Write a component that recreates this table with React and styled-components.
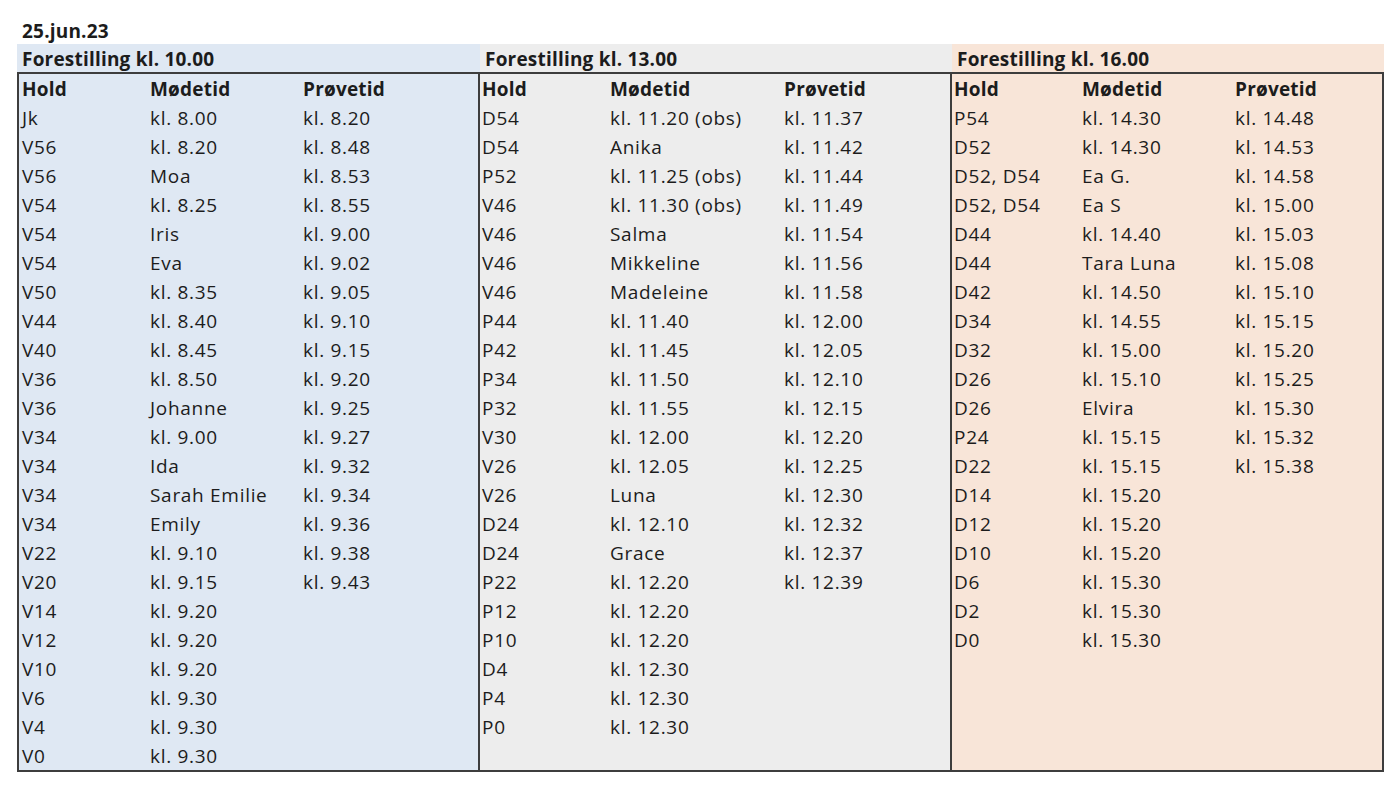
import React from "react"
import styled, { createGlobalStyle } from "styled-components"

const GlobalStyle = createGlobalStyle`
  html, body {
    margin: 0;
    padding: 0;
    background: #ffffff;
  }
  body {
    font-family: "Open Sans", Lato, "Liberation Sans", sans-serif;
    color: #1c1c1c;
  }
`

const Page = styled.main`
  width: 1400px;
  height: 788px;
  padding: 21px 0 0 17px;
  box-sizing: border-box;
`

const DateTitle = styled.h1`
  margin: 0;
  padding-left: 5px;
  height: 23px;
  font-size: 19px;
  line-height: 21px;
  font-weight: 700;
  letter-spacing: 0.2px;
`

const Board = styled.div`
  display: grid;
  grid-template-columns: 463px 472px 432px;
  align-items: stretch;
`

const Section = styled.section`
  display: flex;
  flex-direction: column;
  background: ${p => p.$bg};
`

const Band = styled.div`
  height: 28px;
  box-sizing: border-box;
  padding: 1px 0 0 5px;
  font-size: 19px;
  font-weight: 700;
  line-height: 28px;
  letter-spacing: 0.2px;
  white-space: nowrap;
`

const Table = styled.div`
  flex: 1;
  border-top: 2px solid #3d3d3d;
  border-bottom: 2px solid #3d3d3d;
  border-right: 2px solid #3d3d3d;
  border-left: ${p => p.$first ? "2px solid #3d3d3d" : "none"};
  margin-left: ${p => p.$first ? 0 : -1}px;
`

const Row = styled.div`
  display: grid;
  grid-template-columns: ${p => p.$cols};
  align-items: start;
  height: 29px;
  box-sizing: border-box;
  padding: 2px 0 0 3px;
  font-size: 19px;
  line-height: 27px;
  font-weight: ${p => p.$head ? 700 : 400};
  letter-spacing: ${p => p.$head ? "0.2px" : "0.7px"};
  white-space: nowrap;
`

const Cell = styled.span``

const shows = [
  {
    title: "Forestilling kl. 10.00",
    bg: "#dfe8f3",
    cols: "128px 153px 1fr",
    rows: [
      ["Jk", "kl. 8.00", "kl. 8.20"],
      ["V56", "kl. 8.20", "kl. 8.48"],
      ["V56", "Moa", "kl. 8.53"],
      ["V54", "kl. 8.25", "kl. 8.55"],
      ["V54", "Iris", "kl. 9.00"],
      ["V54", "Eva", "kl. 9.02"],
      ["V50", "kl. 8.35", "kl. 9.05"],
      ["V44", "kl. 8.40", "kl. 9.10"],
      ["V40", "kl. 8.45", "kl. 9.15"],
      ["V36", "kl. 8.50", "kl. 9.20"],
      ["V36", "Johanne", "kl. 9.25"],
      ["V34", "kl. 9.00", "kl. 9.27"],
      ["V34", "Ida", "kl. 9.32"],
      ["V34", "Sarah Emilie", "kl. 9.34"],
      ["V34", "Emily", "kl. 9.36"],
      ["V22", "kl. 9.10", "kl. 9.38"],
      ["V20", "kl. 9.15", "kl. 9.43"],
      ["V14", "kl. 9.20", ""],
      ["V12", "kl. 9.20", ""],
      ["V10", "kl. 9.20", ""],
      ["V6", "kl. 9.30", ""],
      ["V4", "kl. 9.30", ""],
      ["V0", "kl. 9.30", ""],
    ],
  },
  {
    title: "Forestilling kl. 13.00",
    bg: "#ededed",
    cols: "128px 174px 1fr",
    rows: [
      ["D54", "kl. 11.20 (obs)", "kl. 11.37"],
      ["D54", "Anika", "kl. 11.42"],
      ["P52", "kl. 11.25 (obs)", "kl. 11.44"],
      ["V46", "kl. 11.30 (obs)", "kl. 11.49"],
      ["V46", "Salma", "kl. 11.54"],
      ["V46", "Mikkeline", "kl. 11.56"],
      ["V46", "Madeleine", "kl. 11.58"],
      ["P44", "kl. 11.40", "kl. 12.00"],
      ["P42", "kl. 11.45", "kl. 12.05"],
      ["P34", "kl. 11.50", "kl. 12.10"],
      ["P32", "kl. 11.55", "kl. 12.15"],
      ["V30", "kl. 12.00", "kl. 12.20"],
      ["V26", "kl. 12.05", "kl. 12.25"],
      ["V26", "Luna", "kl. 12.30"],
      ["D24", "kl. 12.10", "kl. 12.32"],
      ["D24", "Grace", "kl. 12.37"],
      ["P22", "kl. 12.20", "kl. 12.39"],
      ["P12", "kl. 12.20", ""],
      ["P10", "kl. 12.20", ""],
      ["D4", "kl. 12.30", ""],
      ["P4", "kl. 12.30", ""],
      ["P0", "kl. 12.30", ""],
    ],
  },
  {
    title: "Forestilling kl. 16.00",
    bg: "#f8e5d8",
    cols: "128px 153px 1fr",
    rows: [
      ["P54", "kl. 14.30", "kl. 14.48"],
      ["D52", "kl. 14.30", "kl. 14.53"],
      ["D52, D54", "Ea G.", "kl. 14.58"],
      ["D52, D54", "Ea S", "kl. 15.00"],
      ["D44", "kl. 14.40", "kl. 15.03"],
      ["D44", "Tara Luna", "kl. 15.08"],
      ["D42", "kl. 14.50", "kl. 15.10"],
      ["D34", "kl. 14.55", "kl. 15.15"],
      ["D32", "kl. 15.00", "kl. 15.20"],
      ["D26", "kl. 15.10", "kl. 15.25"],
      ["D26", "Elvira", "kl. 15.30"],
      ["P24", "kl. 15.15", "kl. 15.32"],
      ["D22", "kl. 15.15", "kl. 15.38"],
      ["D14", "kl. 15.20", ""],
      ["D12", "kl. 15.20", ""],
      ["D10", "kl. 15.20", ""],
      ["D6", "kl. 15.30", ""],
      ["D2", "kl. 15.30", ""],
      ["D0", "kl. 15.30", ""],
    ],
  },
]

export default function App() {
  return (
    <>
      <GlobalStyle />
      <Page>
        <DateTitle>25.jun.23</DateTitle>
        <Board>
          {shows.map((show, i) => (
            <Section key={show.title} $bg={show.bg}>
              <Band>{show.title}</Band>
              <Table $first={i === 0}>
                <Row $head $cols={show.cols}>
                  <Cell>Hold</Cell>
                  <Cell>Mødetid</Cell>
                  <Cell>Prøvetid</Cell>
                </Row>
                {show.rows.map((r, j) => (
                  <Row key={j} $cols={show.cols}>
                    {r.map((c, k) => <Cell key={k}>{c}</Cell>)}
                  </Row>
                ))}
              </Table>
            </Section>
          ))}
        </Board>
      </Page>
    </>
  )
}
